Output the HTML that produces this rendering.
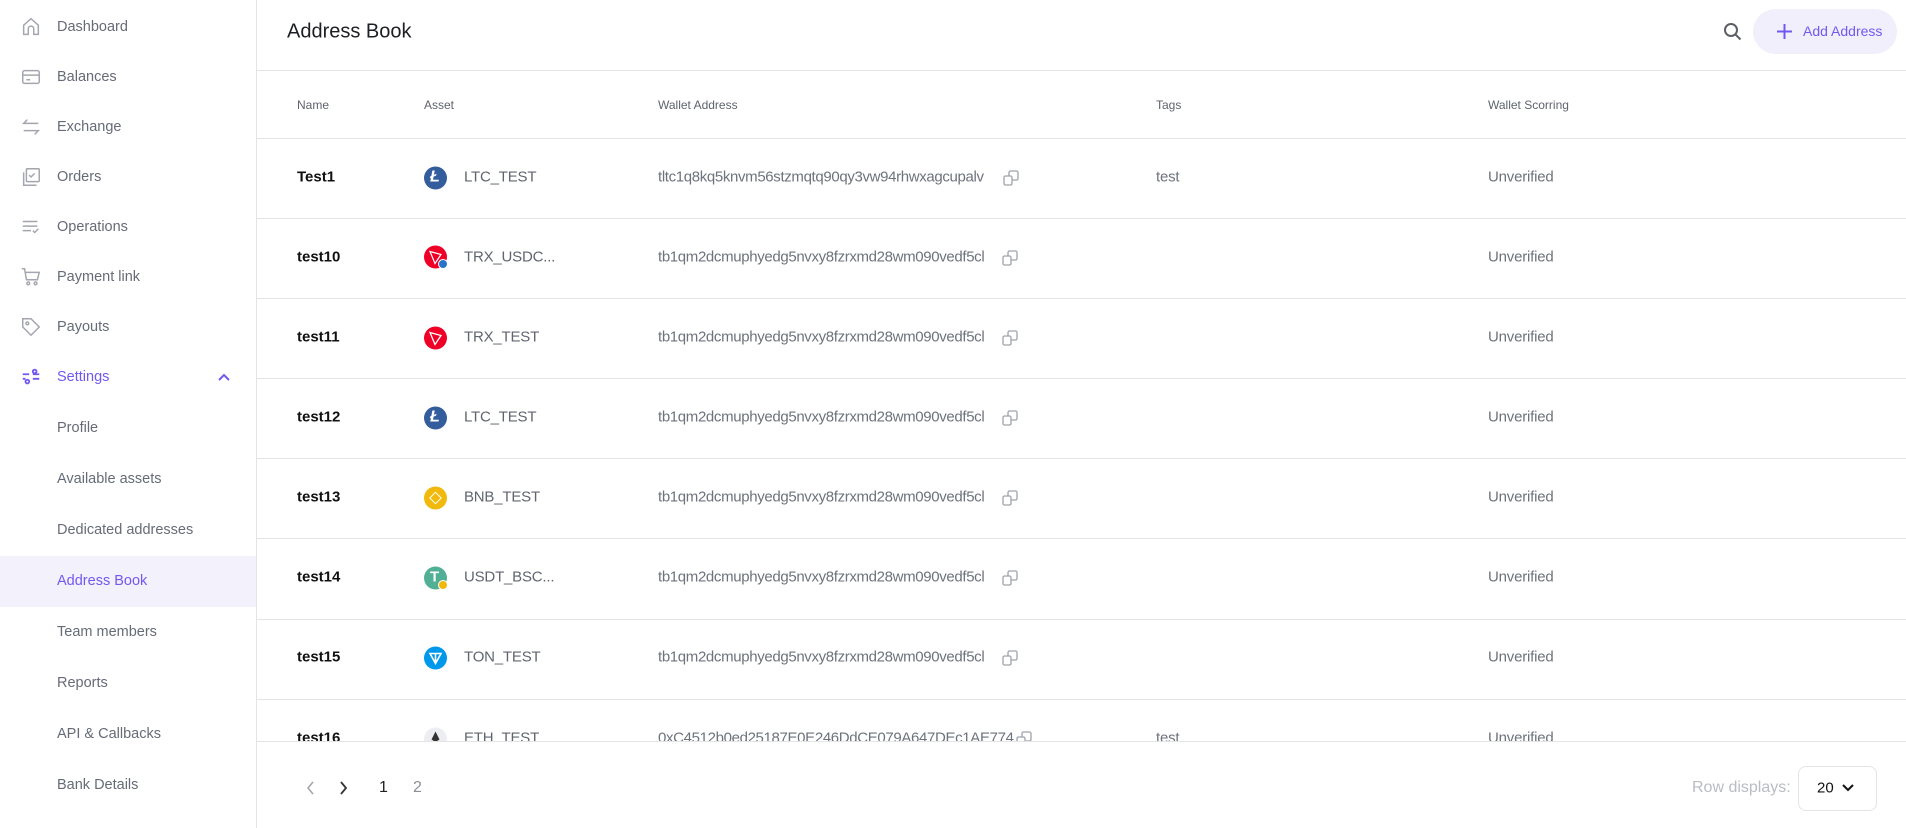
<!DOCTYPE html>
<html><head><meta charset="utf-8"><style>
*{margin:0;padding:0;box-sizing:border-box}
html,body{width:1906px;height:828px;overflow:hidden}
body{background:#fff;font-family:"Liberation Sans",sans-serif;position:relative}
.sb{position:absolute;left:0;top:0;width:257px;height:828px;border-right:1px solid #e4e4e7}
.it{position:absolute;left:57px;font-size:14.5px;color:#676b77;transform:translateY(-50%)}
.ic{position:absolute;left:20px;width:22px;height:22px;transform:translateY(-50%)}
.act{position:absolute;left:0;top:556px;width:256px;height:51px;background:#f3f1fc}
.h{position:absolute;left:257px;top:0;right:0;height:71px;border-bottom:1px solid #e4e4e7}
.t{position:absolute;transform:translateY(-50%);white-space:nowrap}
.line{position:absolute;left:257px;right:0;height:1px;background:#e4e4e7}
.hd{font-size:12px;color:#5f636d}
.nm{font-size:15px;font-weight:bold;color:#111}
.as{font-size:15px;color:#61656f;letter-spacing:-0.2px}
.wa{font-size:15px;color:#6e727c;letter-spacing:-0.35px}
.un{font-size:15px;color:#6e727c;letter-spacing:-0.2px}
.coin{position:absolute;left:424px;width:23px;height:23px;border-radius:50%;transform:translateY(-50%)}
.cp{position:absolute;width:16px;height:16px;transform:translateY(-50%)}
</style></head><body>
<div class="sb">
<div class="act"></div>
<svg class="ic" style="top:27px" viewBox="0 0 24 24" fill="none" stroke="#a3a6ae" stroke-width="1.6"><path d="M4 20V10l8-7 8 7v10h-5v-6a3 3 0 0 0-6 0v6z"/></svg>
<svg class="ic" style="top:77px" viewBox="0 0 24 24" fill="none" stroke="#a3a6ae" stroke-width="1.6"><rect x="3" y="5" width="18" height="14" rx="2"/><path d="M3 10h18M7 15h4"/></svg>
<svg class="ic" style="top:127px" viewBox="0 0 24 24" fill="none" stroke="#a3a6ae" stroke-width="1.6"><path d="M20 8H4l4-4M4 16h16l-4 4"/></svg>
<svg class="ic" style="top:177px" viewBox="0 0 24 24" fill="none" stroke="#a3a6ae" stroke-width="1.6"><rect x="7" y="3" width="14" height="14" rx="1"/><path d="M4 7v14h14M10 10l2 2 4-4"/></svg>
<svg class="ic" style="top:227px" viewBox="0 0 24 24" fill="none" stroke="#a3a6ae" stroke-width="1.6"><path d="M3 6h16M3 11h16M3 16h9M14 16l2 2 4-4"/></svg>
<svg class="ic" style="top:277px" viewBox="0 0 24 24" fill="none" stroke="#a3a6ae" stroke-width="1.6"><path d="M2 3h3l2 12h12l2-8H6"/><circle cx="9" cy="19" r="1.5"/><circle cx="17" cy="19" r="1.5"/></svg>
<svg class="ic" style="top:327px" viewBox="0 0 24 24" fill="none" stroke="#a3a6ae" stroke-width="1.6"><path d="M3 3h9l9 9-9 9-9-9z"/><circle cx="8" cy="8" r="1.5"/></svg>
<svg class="ic" style="top:377px" viewBox="0 0 24 24" fill="none" stroke="#7358f0" stroke-width="2"><path d="M3 9h7M14 14h7M3 14h3M14 9h7"/><circle cx="8" cy="17" r="2"/><circle cx="16" cy="6" r="2"/></svg>
<div class="it" style="top:27px">Dashboard</div>
<div class="it" style="top:77px">Balances</div>
<div class="it" style="top:127px">Exchange</div>
<div class="it" style="top:177px">Orders</div>
<div class="it" style="top:227px">Operations</div>
<div class="it" style="top:277px">Payment link</div>
<div class="it" style="top:327px">Payouts</div>
<div class="it" style="top:377px;color:#7358f0">Settings</div>
<svg style="position:absolute;left:217px;top:371px" width="14" height="12" viewBox="0 0 14 12" fill="none" stroke="#7358f0" stroke-width="2"><path d="M2 9l5-5 5 5"/></svg>
<div class="it" style="top:428px">Profile</div>
<div class="it" style="top:479px">Available assets</div>
<div class="it" style="top:530px">Dedicated addresses</div>
<div class="it" style="top:581px;color:#7358f0">Address Book</div>
<div class="it" style="top:632px">Team members</div>
<div class="it" style="top:683px">Reports</div>
<div class="it" style="top:734px">API &amp; Callbacks</div>
<div class="it" style="top:785px">Bank Details</div>
</div>
<div class="h"></div>
<div class="t" style="left:287px;top:32px;font-size:20px;color:#1d1f24">Address Book</div>
<svg style="position:absolute;left:1723px;top:22px" width="20" height="20" viewBox="0 0 20 20" fill="none" stroke="#5c5f66" stroke-width="2"><circle cx="8" cy="8" r="6"/><path d="M12.5 12.5l5 5"/></svg>
<div style="position:absolute;left:1753px;top:9px;width:144px;height:45px;border-radius:23px;background:#f1effc"></div>
<svg style="position:absolute;left:1776px;top:23px" width="17" height="17" viewBox="0 0 17 17" stroke="#7358f0" stroke-width="2"><path d="M8.5 1v15M1 8.5h15"/></svg>
<div class="t" style="left:1803px;top:31px;font-size:14px;color:#7358f0">Add Address</div>

<div class="t hd" style="left:297px;top:105px">Name</div>
<div class="t hd" style="left:424px;top:105px">Asset</div>
<div class="t hd" style="left:658px;top:105px">Wallet Address</div>
<div class="t hd" style="left:1156px;top:105px">Tags</div>
<div class="t hd" style="left:1488px;top:105px">Wallet Scorring</div>
<div class="line" style="top:138px"></div>
<div class="line" style="top:218px"></div>
<div class="line" style="top:298px"></div>
<div class="line" style="top:378px"></div>
<div class="line" style="top:458px"></div>
<div class="line" style="top:538px"></div>
<div class="line" style="top:619px"></div>
<div class="line" style="top:699px"></div>

<div style="position:absolute;left:257px;width:1649px;top:139px;height:602px;overflow:hidden">
<div style="position:absolute;left:-257px;top:-139px;width:1906px;height:741px">
<div class="t nm" style="left:297px;top:177px">Test1</div>
<div class="coin" style="top:178px;background:#345d9d"><span style="position:absolute;left:6px;top:2px;color:#fff;font-weight:bold;font-size:16px;font-style:italic">Ł</span></div>
<div class="t as" style="left:464px;top:177px">LTC_TEST</div>
<div class="t wa" style="left:658px;top:177px">tltc1q8kq5knvm56stzmqtq90qy3vw94rhwxagcupalv</div>
<div class="t un" style="left:1156px;top:177px">test</div>
<div class="t un" style="left:1488px;top:177px">Unverified</div>

<div class="t nm" style="left:297px;top:257px">test10</div>
<div class="coin" style="top:257px;background:#ef0027"><svg width="23" height="23" viewBox="0 0 23 23" fill="none" stroke="#fff" stroke-width="1.2"><path d="M6 6l11 3-6 9z M6 6l5 12"/></svg></div><div style="position:absolute;left:438px;top:259px;width:10px;height:10px;border-radius:50%;background:#2775ca;border:1.5px solid #fff"></div>
<div class="t as" style="left:464px;top:257px">TRX_USDC...</div>
<div class="t wa" style="left:658px;top:257px">tb1qm2dcmuphyedg5nvxy8fzrxmd28wm090vedf5cl</div>
<div class="t un" style="left:1488px;top:257px">Unverified</div>

<div class="t nm" style="left:297px;top:337px">test11</div>
<div class="coin" style="top:338px;background:#ef0027"><svg width="23" height="23" viewBox="0 0 23 23" fill="none" stroke="#fff" stroke-width="1.3"><path d="M6 6l11 3-6 9z M6 6l5 12"/></svg></div>
<div class="t as" style="left:464px;top:337px">TRX_TEST</div>
<div class="t wa" style="left:658px;top:337px">tb1qm2dcmuphyedg5nvxy8fzrxmd28wm090vedf5cl</div>
<div class="t un" style="left:1488px;top:337px">Unverified</div>

<div class="t nm" style="left:297px;top:417px">test12</div>
<div class="coin" style="top:418px;background:#345d9d"><span style="position:absolute;left:6px;top:2px;color:#fff;font-weight:bold;font-size:16px;font-style:italic">Ł</span></div>
<div class="t as" style="left:464px;top:417px">LTC_TEST</div>
<div class="t wa" style="left:658px;top:417px">tb1qm2dcmuphyedg5nvxy8fzrxmd28wm090vedf5cl</div>
<div class="t un" style="left:1488px;top:417px">Unverified</div>

<div class="t nm" style="left:297px;top:497px">test13</div>
<div class="coin" style="top:498px;background:#f0b90b"><div style="position:absolute;left:7px;top:7px;width:9px;height:9px;border:1.5px solid #fff;transform:rotate(45deg)"></div></div>
<div class="t as" style="left:464px;top:497px">BNB_TEST</div>
<div class="t wa" style="left:658px;top:497px">tb1qm2dcmuphyedg5nvxy8fzrxmd28wm090vedf5cl</div>
<div class="t un" style="left:1488px;top:497px">Unverified</div>

<div class="t nm" style="left:297px;top:577px">test14</div>
<div class="coin" style="top:578px;background:#50af95"><span style="position:absolute;left:6px;top:2px;color:#fff;font-weight:bold;font-size:15px">T</span></div><div style="position:absolute;left:438px;top:580px;width:10px;height:10px;border-radius:50%;background:#f0b90b;border:1.5px solid #fff"></div>
<div class="t as" style="left:464px;top:577px">USDT_BSC...</div>
<div class="t wa" style="left:658px;top:577px">tb1qm2dcmuphyedg5nvxy8fzrxmd28wm090vedf5cl</div>
<div class="t un" style="left:1488px;top:577px">Unverified</div>

<div class="t nm" style="left:297px;top:657px">test15</div>
<div class="coin" style="top:658px;background:#0098ea"><svg width="23" height="23" viewBox="0 0 23 23" fill="none" stroke="#fff" stroke-width="1.6"><path d="M6 7h11l-5.5 10z M11.5 7v10"/></svg></div>
<div class="t as" style="left:464px;top:657px">TON_TEST</div>
<div class="t wa" style="left:658px;top:657px">tb1qm2dcmuphyedg5nvxy8fzrxmd28wm090vedf5cl</div>
<div class="t un" style="left:1488px;top:657px">Unverified</div>

<div class="t nm" style="left:297px;top:738px">test16</div>
<div class="coin" style="top:739px;background:#eceef1"><svg width="23" height="23" viewBox="0 0 23 23"><path d="M11.5 4l4 8-4 2.5-4-2.5z" fill="#333"/></svg></div>
<div class="t as" style="left:464px;top:738px">ETH_TEST</div>
<div class="t wa" style="left:658px;top:738px">0xC4512b0ed25187E0E246DdCE079A647DEc1AE774</div>
<div class="t un" style="left:1156px;top:738px">test</div>
<div class="t un" style="left:1488px;top:738px">Unverified</div>
<svg class="cp" style="left:1016px;top:739px" viewBox="0 0 16 16" fill="none" stroke="#9ea2aa" stroke-width="1.3"><rect x="1" y="6" width="8" height="9" rx="1.5"/><path d="M6 6V2.5A1.5 1.5 0 0 1 7.5 1h6A1.5 1.5 0 0 1 15 2.5v6a1.5 1.5 0 0 1-1.5 1.5H9"/></svg>
</div></div>
<div class="line" style="top:741px"></div>

<svg class="cp" style="left:1003px;top:178px" viewBox="0 0 16 16" fill="none" stroke="#9ea2aa" stroke-width="1.3"><rect x="1" y="6" width="8" height="9" rx="1.5"/><path d="M6 6V2.5A1.5 1.5 0 0 1 7.5 1h6A1.5 1.5 0 0 1 15 2.5v6a1.5 1.5 0 0 1-1.5 1.5H9"/></svg>
<svg class="cp" style="left:1002px;top:258px" viewBox="0 0 16 16" fill="none" stroke="#9ea2aa" stroke-width="1.3"><rect x="1" y="6" width="8" height="9" rx="1.5"/><path d="M6 6V2.5A1.5 1.5 0 0 1 7.5 1h6A1.5 1.5 0 0 1 15 2.5v6a1.5 1.5 0 0 1-1.5 1.5H9"/></svg>
<svg class="cp" style="left:1002px;top:338px" viewBox="0 0 16 16" fill="none" stroke="#9ea2aa" stroke-width="1.3"><rect x="1" y="6" width="8" height="9" rx="1.5"/><path d="M6 6V2.5A1.5 1.5 0 0 1 7.5 1h6A1.5 1.5 0 0 1 15 2.5v6a1.5 1.5 0 0 1-1.5 1.5H9"/></svg>
<svg class="cp" style="left:1002px;top:418px" viewBox="0 0 16 16" fill="none" stroke="#9ea2aa" stroke-width="1.3"><rect x="1" y="6" width="8" height="9" rx="1.5"/><path d="M6 6V2.5A1.5 1.5 0 0 1 7.5 1h6A1.5 1.5 0 0 1 15 2.5v6a1.5 1.5 0 0 1-1.5 1.5H9"/></svg>
<svg class="cp" style="left:1002px;top:498px" viewBox="0 0 16 16" fill="none" stroke="#9ea2aa" stroke-width="1.3"><rect x="1" y="6" width="8" height="9" rx="1.5"/><path d="M6 6V2.5A1.5 1.5 0 0 1 7.5 1h6A1.5 1.5 0 0 1 15 2.5v6a1.5 1.5 0 0 1-1.5 1.5H9"/></svg>
<svg class="cp" style="left:1002px;top:578px" viewBox="0 0 16 16" fill="none" stroke="#9ea2aa" stroke-width="1.3"><rect x="1" y="6" width="8" height="9" rx="1.5"/><path d="M6 6V2.5A1.5 1.5 0 0 1 7.5 1h6A1.5 1.5 0 0 1 15 2.5v6a1.5 1.5 0 0 1-1.5 1.5H9"/></svg>
<svg class="cp" style="left:1002px;top:658px" viewBox="0 0 16 16" fill="none" stroke="#9ea2aa" stroke-width="1.3"><rect x="1" y="6" width="8" height="9" rx="1.5"/><path d="M6 6V2.5A1.5 1.5 0 0 1 7.5 1h6A1.5 1.5 0 0 1 15 2.5v6a1.5 1.5 0 0 1-1.5 1.5H9"/></svg>

<svg style="position:absolute;left:305px;top:780px" width="12" height="16" viewBox="0 0 12 16" fill="none" stroke="#a3a6ae" stroke-width="1.6"><path d="M8 2L3 8l5 6"/></svg>
<svg style="position:absolute;left:337px;top:780px" width="12" height="16" viewBox="0 0 12 16" fill="none" stroke="#333" stroke-width="1.8"><path d="M4 2l5 6-5 6"/></svg>
<div class="t" style="left:379px;top:788px;font-size:16px;color:#222">1</div>
<div class="t" style="left:413px;top:788px;font-size:16px;color:#8b8f98">2</div>
<div class="t" style="left:1692px;top:788px;font-size:16px;color:#b9bcc3">Row displays:</div>
<div style="position:absolute;left:1798px;top:766px;width:79px;height:45px;border:1px solid #e3e4e8;border-radius:8px"></div>
<div class="t" style="left:1817px;top:788px;font-size:15px;color:#111">20</div>
<svg style="position:absolute;left:1841px;top:783px" width="14" height="10" viewBox="0 0 14 10" fill="none" stroke="#111" stroke-width="2"><path d="M2 2l5 5 5-5"/></svg>
</body></html>
